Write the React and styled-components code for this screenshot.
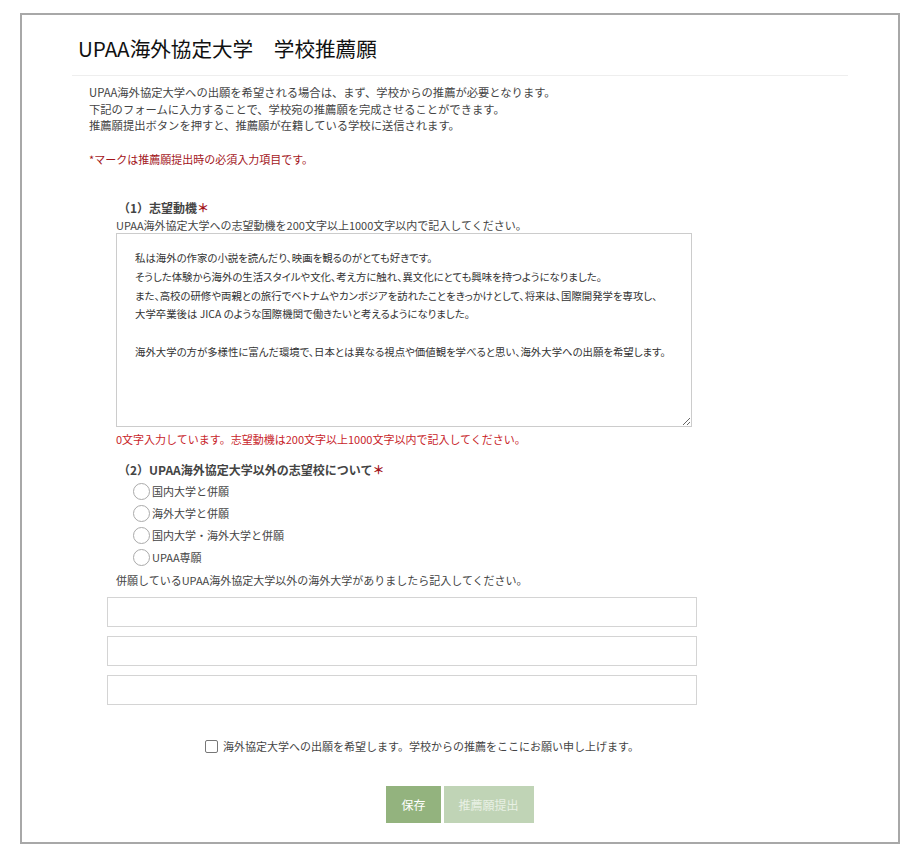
import React from 'react'
import styled, { createGlobalStyle } from 'styled-components'

const Global = createGlobalStyle`
  body {
    margin: 0;
    background: #fff;
    font-family: "Noto Sans CJK JP", "Noto Sans", sans-serif;
    color: #333;
  }
`

const Page = styled.div`
  padding: 13px 20px 0 20px;
`
const Frame = styled.div`
  border: 2px solid #a8a8a8;
  height: 831px;
  box-sizing: border-box;
  padding: 0 50px 0 50px;
`
const Title = styled.h1`
  margin: 0;
  padding: 19px 0 13px 6px;
  font-size: 20.6px;
  font-weight: 400;
  color: #111;
  border-bottom: 1px solid #eee;
  line-height: 28px;
`
const Intro = styled.div`
  padding: 8px 0 0 17px;
  font-size: 11.3px;
  line-height: 16.5px;
  color: #444;
`
const Required = styled.div`
  margin-top: 17px;
  font-size: 11px;
  color: #a3151b;
`
const Section = styled.div`
  padding-left: 44px;
  margin-top: ${(p) => p.top || 0}px;
`
const Heading = styled.div`
  font-size: 12px;
  font-weight: 700;
  color: #444;
  line-height: 17px;
  margin-left: 2px;
  span {
    color: #a3151b;
  }
`
const Hint = styled.div`
  font-size: 11px;
  line-height: 16px;
  color: #444;
  margin-top: ${(p) => p.top || 0}px;
`
const TextArea = styled.div`
  width: 576px;
  height: 194px;
  box-sizing: border-box;
  border: 1px solid #ccc;
  padding: 15px 18px;
  font-size: 10.4px;
  line-height: 18.8px;
  color: #333;
  white-space: nowrap;
  font-feature-settings: "palt";
  resize: both;
  overflow: hidden;
  p {
    margin: 0;
  }
`
const ErrorText = styled.div`
  margin-top: 4px;
  font-size: 11px;
  color: #c8242a;
  line-height: 16px;
`
const RadioList = styled.div`
  display: flex;
  flex-direction: column;
  gap: 4px;
  padding: 4px 0 0 17px;
`
const RadioRow = styled.label`
  display: flex;
  align-items: center;
  font-size: 11px;
  color: #444;
  height: 18px;
`
const Circle = styled.span`
  width: 17px;
  height: 17px;
  border-radius: 50%;
  border: 1px solid #aaa;
  box-sizing: border-box;
  margin-right: 2px;
`
const InputList = styled.div`
  display: flex;
  flex-direction: column;
  gap: 9px;
  margin-top: 9px;
  margin-left: -9px;
`
const Input = styled.div`
  width: 590px;
  height: 30px;
  box-sizing: border-box;
  border: 1px solid #d4d4d4;
`
const Agree = styled.label`
  display: flex;
  align-items: center;
  justify-content: center;
  gap: 5px;
  margin: 33px 0 0 0;
  padding-right: 76px;
  font-size: 11px;
  color: #444;
`
const Box = styled.span`
  width: 11px;
  height: 11px;
  border: 1px solid #777;
  border-radius: 2px;
`
const Buttons = styled.div`
  display: flex;
  justify-content: center;
  gap: 3px;
  margin-top: 32px;
`
const Button = styled.button`
  height: 37px;
  padding: 0 15px;
  border: none;
  font-family: inherit;
  font-size: 12px;
  color: ${(p) => (p.disabled ? '#e8f0e4' : '#fff')};
  background: ${(p) => (p.disabled ? '#c0d4b6' : '#93b37e')};
`

const options = ['国内大学と併願', '海外大学と併願', '国内大学・海外大学と併願', 'UPAA専願']

const App = () => {
  return (
    <Page>
      <Global />
      <Frame>
        <Title>UPAA海外協定大学　学校推薦願</Title>
        <Intro>
          UPAA海外協定大学への出願を希望される場合は、まず、学校からの推薦が必要となります。
          <br />
          下記のフォームに入力することで、学校宛の推薦願を完成させることができます。
          <br />
          推薦願提出ボタンを押すと、推薦願が在籍している学校に送信されます。
          <Required>*マークは推薦願提出時の必須入力項目です。</Required>
        </Intro>
        <Section top={32}>
          <Heading>（1）志望動機<span>＊</span></Heading>
          <Hint top={1}>UPAA海外協定大学への志望動機を200文字以上1000文字以内で記入してください。</Hint>
          <TextArea>
            <p>私は海外の作家の小説を読んだり、映画を観るのがとても好きです。</p>
            <p>そうした体験から海外の生活スタイルや文化、考え方に触れ、異文化にとても興味を持つようになりました。</p>
            <p>また、高校の研修や両親との旅行でベトナムやカンボジアを訪れたことをきっかけとして、将来は、国際開発学を専攻し、</p>
            <p>大学卒業後は JICA のような国際機関で働きたいと考えるようになりました。</p>
            <p>&nbsp;</p>
            <p>海外大学の方が多様性に富んだ環境で、日本とは異なる視点や価値観を学べると思い、海外大学への出願を希望します。</p>
          </TextArea>
          <ErrorText>0文字入力しています。志望動機は200文字以上1000文字以内で記入してください。</ErrorText>
        </Section>
        <Section top={14}>
          <Heading>（2）UPAA海外協定大学以外の志望校について<span>＊</span></Heading>
          <RadioList>
            {options.map((o) => (
              <RadioRow key={o}>
                <Circle />
                {o}
              </RadioRow>
            ))}
          </RadioList>
          <Hint top={6}>併願しているUPAA海外協定大学以外の海外大学がありましたら記入してください。</Hint>
          <InputList>
            <Input />
            <Input />
            <Input />
          </InputList>
        </Section>
        <Agree>
          <Box />
          海外協定大学への出願を希望します。学校からの推薦をここにお願い申し上げます。
        </Agree>
        <Buttons>
          <Button>保存</Button>
          <Button disabled>推薦願提出</Button>
        </Buttons>
      </Frame>
    </Page>
  )
}

export default App
